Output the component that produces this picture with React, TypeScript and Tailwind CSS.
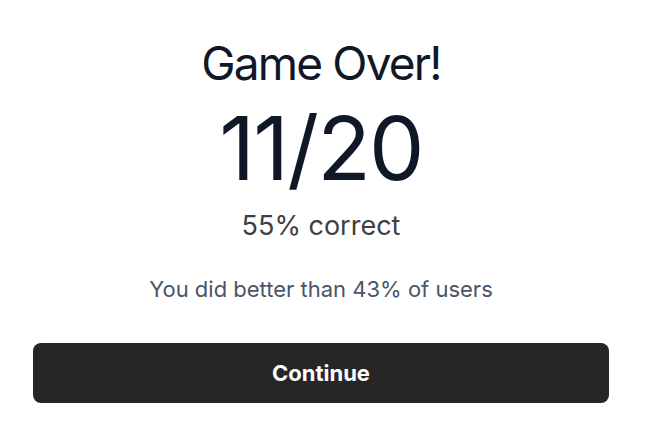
export default function App() {
  return (
    <div
      className="min-h-screen bg-white flex flex-col items-center pl-[29px] pr-[33px] pt-[40px]"
      style={{ fontFamily: 'Inter, "Noto Sans", sans-serif' }}
    >
      <h1 className="text-[46px] leading-none tracking-[-0.04em] text-gray-900">Game Over!</h1>
      <div className="text-[88px] leading-none tracking-[-0.02em] text-gray-900 mt-[18px]">11/20</div>
      <p className="text-[27px] leading-none text-neutral-700 mt-[20px]">55% correct</p>
      <p className="text-[22px] leading-none text-gray-600 mt-[39px]">You did better than 43% of users</p>
      <button className="mt-[43px] w-[576px] h-[60px] rounded-lg bg-[#262626] text-white text-[22px] font-bold">
        Continue
      </button>
    </div>
  );
}
